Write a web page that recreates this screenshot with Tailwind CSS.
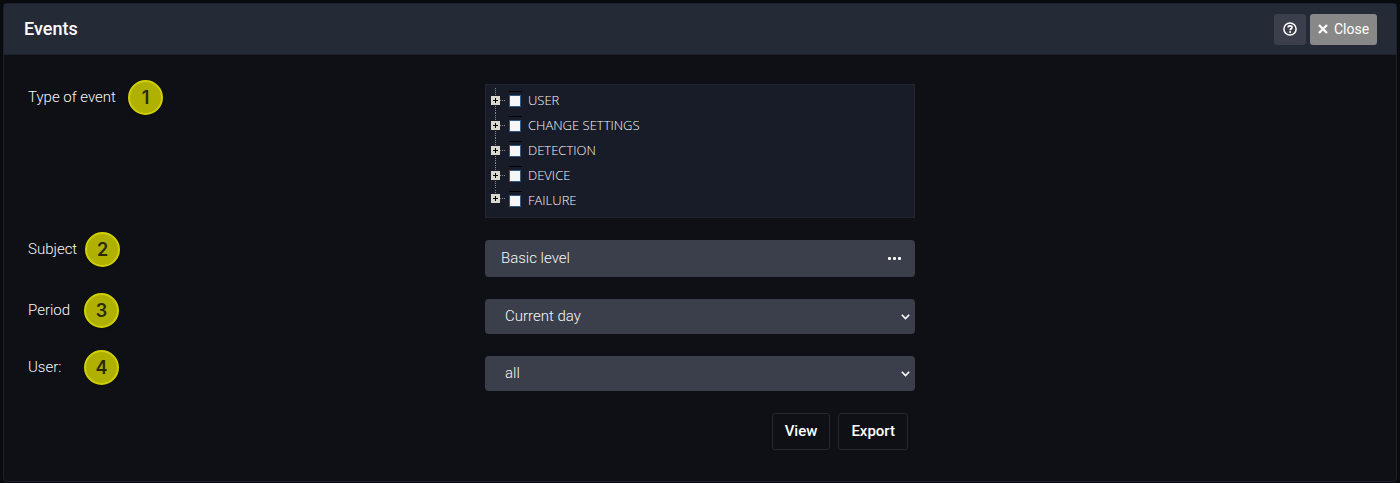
<!DOCTYPE html>
<html lang="en">
  <head>
    <meta charset="UTF-8" />
    <meta name="viewport" content="width=device-width, initial-scale=1.0" />
    <script src="https://cdn.jsdelivr.net/npm/@tailwindcss/browser@4"></script>
    <title>Events</title>
  </head>
  <body class="bg-[#0a0b0f] font-['Roboto',sans-serif] text-[#f8f8f8]">
    <!-- Tree node icons -->
    <svg class="hidden">
      <symbol id="node" viewBox="0 0 18 25">
        <path d="M4.500 0v25M9 12.500h6" stroke="#8a8c90" stroke-dasharray="1 1" />
        <path d="M0 8h9v9H0z" fill="#d9d9cf" />
        <path d="M2 12.500h5M4.500 10v5" stroke="#000" />
      </symbol>
      <symbol id="node-last" viewBox="0 0 18 25">
        <path d="M4.500 2v6M9 10.500h6" stroke="#8a8c90" stroke-dasharray="1 1" />
        <path d="M0 6h9v9H0z" fill="#d9d9cf" />
        <path d="M2 10.500h5M4.500 8v5" stroke="#000" />
      </symbol>
    </svg>

    <div class="flex min-h-screen flex-col px-[3px] pt-[3px] pb-px">
      <main class="grow rounded-sm border border-[#1d212c] bg-[#0e1015]">
        <!-- Header -->
        <header
          class="flex h-[51px] items-center justify-between border-b border-[#1d212c] bg-[#252a37] pr-[19px] pl-5">
          <h1 class="text-lg font-medium text-white">Events</h1>
          <div class="flex gap-1">
            <button
              type="button"
              aria-label="Help"
              class="flex h-[31px] w-8 items-center justify-center rounded-[3px] bg-[#3a3f4b] text-white">
              <svg class="size-[14px]" viewBox="0 0 14 14" fill="none" stroke="currentColor">
                <circle cx="7" cy="7" r="6.100" stroke-width="1.500" />
                <path d="M5 5.500C5.100 4.400 5.900 3.900 7 3.900c1.200 0 2 .7 2 1.600C9 6.700 7.100 6.700 7.100 8.200" stroke-width="1.700" />
                <circle cx="7.100" cy="10.100" r="1" fill="currentColor" stroke="none" />
              </svg>
            </button>
            <button
              type="button"
              class="flex h-[31px] w-[67px] items-center justify-center gap-[6px] rounded-[3px] bg-[#888888] text-sm text-white">
              <svg class="size-[10px]" viewBox="0 0 10 10" fill="none" stroke="currentColor" stroke-width="2.200">
                <path d="M1 1l8 8M9 1L1 9" />
              </svg>
              Close
            </button>
          </div>
        </header>

        <form class="pt-[25px] pb-7 text-[15px] font-light">
          <!-- Type of event -->
          <div class="grid grid-cols-3 items-start">
            <div class="flex items-center gap-3 pl-6">
              <span id="type-label">Type of event</span>
              <span
                class="flex size-[35px] items-center justify-center rounded-full border-2 border-[#d0d000] bg-[#b0b000] font-['Inter',sans-serif] text-lg font-semibold text-[#2a2a0a] shadow">1</span>
            </div>
            <div class="px-[17px] pt-1">
              <ul
                aria-labelledby="type-label"
                class="border border-[#212431] bg-[#181b28] pt-[3px] pb-1 pl-[5px] font-['Open_Sans',sans-serif] text-[13px]">
                <li class="flex h-[25px] items-center">
                  <button type="button" aria-label="Expand USER">
                    <svg class="h-[25px] w-[18px]"><use href="#node" /></svg>
                  </button>
                  <label class="flex items-center gap-[6px]">
                    <span class="flex h-[25px] w-[13px] flex-col items-start gap-[3px] pt-[3px]">
                      <span class="h-px w-full bg-black"></span>
                      <input type="checkbox" class="size-3 appearance-none border border-[#2f5a86] bg-[#f6f6f6]" />
                    </span>
                    USER
                  </label>
                </li>
                <li class="flex h-[25px] items-center">
                  <button type="button" aria-label="Expand CHANGE SETTINGS">
                    <svg class="h-[25px] w-[18px]"><use href="#node" /></svg>
                  </button>
                  <label class="flex items-center gap-[6px]">
                    <span class="flex h-[25px] w-[13px] flex-col items-start gap-[3px] pt-[3px]">
                      <span class="h-px w-full bg-black"></span>
                      <input type="checkbox" class="size-3 appearance-none border border-[#2f5a86] bg-[#f6f6f6]" />
                    </span>
                    CHANGE SETTINGS
                  </label>
                </li>
                <li class="flex h-[25px] items-center">
                  <button type="button" aria-label="Expand DETECTION">
                    <svg class="h-[25px] w-[18px]"><use href="#node" /></svg>
                  </button>
                  <label class="flex items-center gap-[6px]">
                    <span class="flex h-[25px] w-[13px] flex-col items-start gap-[3px] pt-[3px]">
                      <span class="h-px w-full bg-black"></span>
                      <input type="checkbox" class="size-3 appearance-none border border-[#2f5a86] bg-[#f6f6f6]" />
                    </span>
                    DETECTION
                  </label>
                </li>
                <li class="flex h-[25px] items-center">
                  <button type="button" aria-label="Expand DEVICE">
                    <svg class="h-[25px] w-[18px]"><use href="#node" /></svg>
                  </button>
                  <label class="flex items-center gap-[6px]">
                    <span class="flex h-[25px] w-[13px] flex-col items-start gap-[3px] pt-[3px]">
                      <span class="h-px w-full bg-black"></span>
                      <input type="checkbox" class="size-3 appearance-none border border-[#2f5a86] bg-[#f6f6f6]" />
                    </span>
                    DEVICE
                  </label>
                </li>
                <li class="flex h-[25px] items-center">
                  <button type="button" aria-label="Expand FAILURE">
                    <svg class="h-[25px] w-[18px]"><use href="#node-last" /></svg>
                  </button>
                  <label class="flex items-center gap-[6px]">
                    <span class="flex h-[25px] w-[13px] flex-col items-start gap-[3px] pt-[3px]">
                      <span class="h-px w-full bg-black"></span>
                      <input type="checkbox" class="size-3 appearance-none border border-[#2f5a86] bg-[#f6f6f6]" />
                    </span>
                    FAILURE
                  </label>
                </li>
              </ul>
            </div>
          </div>

          <!-- Subject -->
          <div class="mt-[14px] grid grid-cols-3 items-start">
            <div class="flex items-center gap-2 pl-6">
              <label for="subject">Subject</label>
              <span
                class="flex size-[35px] items-center justify-center rounded-full border-2 border-[#d0d000] bg-[#b0b000] font-['Inter',sans-serif] text-lg font-semibold text-[#2a2a0a] shadow">2</span>
            </div>
            <div class="px-[17px] pt-2">
              <div class="flex h-[37px] rounded-sm bg-[#3a3f4b]">
                <input id="subject" type="text" value="Basic level" class="min-w-0 grow pl-4 outline-none" />
                <button type="button" aria-label="Choose subject" class="px-[14px] text-white">
                  <svg class="h-1 w-[13px]" viewBox="0 0 13 4" fill="currentColor">
                    <rect width="3" height="3" rx="1" />
                    <rect x="5" width="3" height="3" rx="1" />
                    <rect x="10" width="3" height="3" rx="1" />
                  </svg>
                </button>
              </div>
            </div>
          </div>

          <!-- Period -->
          <div class="mt-4 grid grid-cols-3 items-start">
            <div class="flex items-center gap-3 pl-6">
              <label for="period" class="min-w-11">Period</label>
              <span
                class="flex size-[35px] items-center justify-center rounded-full border-2 border-[#d0d000] bg-[#b0b000] font-['Inter',sans-serif] text-lg font-semibold text-[#2a2a0a] shadow">3</span>
            </div>
            <div class="px-[17px] pt-[6px]">
              <div class="grid items-center">
                <select
                  id="period"
                  class="col-start-1 row-start-1 h-[35px] appearance-none rounded-sm bg-[#3a3f4b] pl-5 outline-none">
                  <option>Current day</option>
                </select>
                <svg class="pointer-events-none col-start-1 row-start-1 mr-[5px] h-[6px] w-[9px] justify-self-end" viewBox="0 0 9 6" fill="none" stroke="#fff" stroke-width="1.600">
                  <path d="M.8 .8l3.700 3.700L8.200 .8" />
                </svg>
              </div>
            </div>
          </div>

          <!-- User -->
          <div class="mt-4 grid grid-cols-3 items-start">
            <div class="flex items-center gap-3 pl-6">
              <label for="user" class="min-w-11">User:</label>
              <span
                class="flex size-[35px] items-center justify-center rounded-full border-2 border-[#d0d000] bg-[#b0b000] font-['Inter',sans-serif] text-lg font-semibold text-[#2a2a0a] shadow">4</span>
            </div>
            <div class="px-[17px] pt-[6px]">
              <div class="grid items-center">
                <select
                  id="user"
                  class="col-start-1 row-start-1 h-[35px] appearance-none rounded-sm bg-[#3a3f4b] pl-5 outline-none">
                  <option>all</option>
                </select>
                <svg class="pointer-events-none col-start-1 row-start-1 mr-[5px] h-[6px] w-[9px] justify-self-end" viewBox="0 0 9 6" fill="none" stroke="#fff" stroke-width="1.600">
                  <path d="M.8 .8l3.700 3.700L8.200 .8" />
                </svg>
              </div>
            </div>
          </div>

          <!-- Actions -->
          <div class="mt-[22px] grid grid-cols-3">
            <div class="col-start-2 flex justify-end gap-2 pr-6">
              <button
                type="button"
                class="h-[37px] rounded-[3px] border border-[#26282e] px-3 font-medium text-white">
                View
              </button>
              <button
                type="button"
                class="h-[37px] rounded-[3px] border border-[#26282e] px-3 font-medium text-white">
                Export
              </button>
            </div>
          </div>
        </form>
      </main>
    </div>
  </body>
</html>
